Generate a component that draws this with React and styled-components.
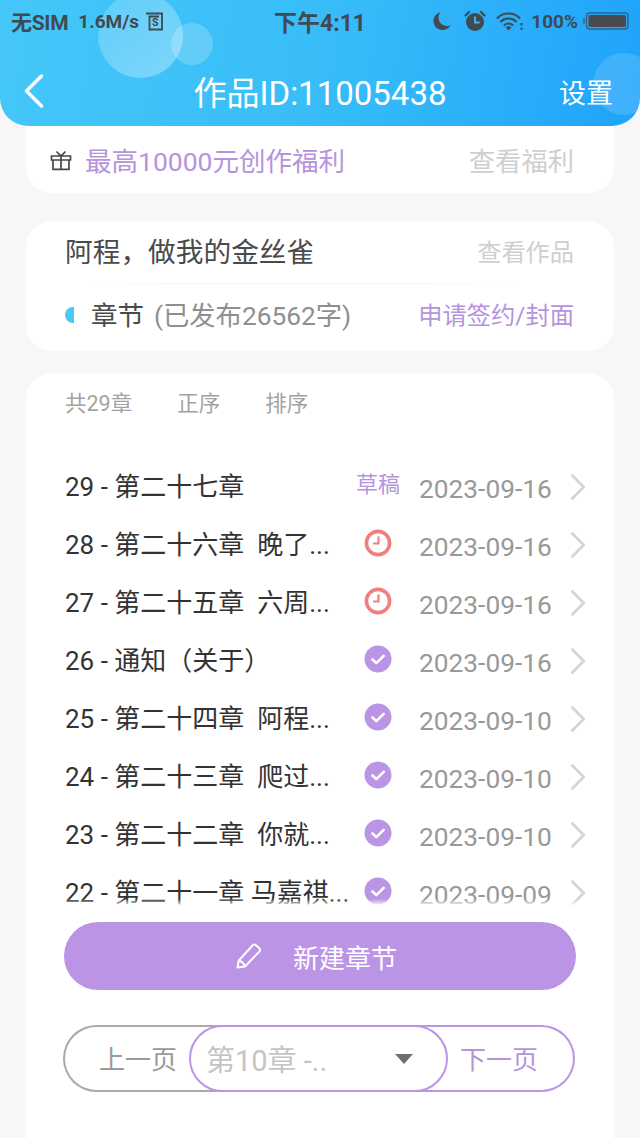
import styled, { createGlobalStyle } from 'styled-components'
import { FiChevronLeft, FiChevronRight } from 'react-icons/fi'

const chapters = [
    { id: 29, title: '29 - 第二十七章', status: 'draft', date: '2023-09-16' },
    { id: 28, title: '28 - 第二十六章  晚了...', status: 'wait', date: '2023-09-16' },
    { id: 27, title: '27 - 第二十五章  六周...', status: 'wait', date: '2023-09-16' },
    { id: 26, title: '26 - 通知（关于）', status: 'ok', date: '2023-09-16' },
    { id: 25, title: '25 - 第二十四章  阿程...', status: 'ok', date: '2023-09-10' },
    { id: 24, title: '24 - 第二十三章  爬过...', status: 'ok', date: '2023-09-10' },
    { id: 23, title: '23 - 第二十二章  你就...', status: 'ok', date: '2023-09-10' },
    { id: 22, title: '22 - 第二十一章 马嘉祺...', status: 'ok', date: '2023-09-09' },
]

function ClockIcon() {
    return (
        <svg width="28" height="28" viewBox="0 0 28 28">
            <circle cx="14" cy="14" r="11.6" fill="#fff" stroke="#f08080" strokeWidth="3.6" />
            <path d="M14.5 7.5v7H9" fill="none" stroke="#f08080" strokeWidth="2.2" />
        </svg>
    )
}

function CheckIcon() {
    return (
        <svg width="28" height="28" viewBox="0 0 28 28">
            <circle cx="14" cy="14" r="13.5" fill="#bc94e6" />
            <path d="M8.5 14.5l3.8 3.6 7.4-7.2" fill="none" stroke="#fff" strokeWidth="2.6" strokeLinecap="round" strokeLinejoin="round" />
        </svg>
    )
}

function StatusIcons() {
    return (
        <StatusBar>
            <StatusLeft>
                <span>无SIM</span>
                <Speed>1.6M/s</Speed>
                <SimIcon width="18" height="19" viewBox="0 0 18 19">
                    <path d="M1 1.5h16v16H4.500V4.500H14" fill="none" stroke="#3f4a52" strokeWidth="1.8" />
                    <text x="10" y="14" fontSize="10.500" fontWeight="700" textAnchor="middle" fill="#3f4a52" fontFamily="Roboto, sans-serif">S</text>
                </SimIcon>
            </StatusLeft>
            <StatusTime>下午4:11</StatusTime>
            <StatusRight>
                <MoonIcon width="19" height="20" viewBox="0 0 19 20">
                    <path d="M8.500 1C4 2.600 1.500 6 1.500 10c0 5 4 9 9 9 3.600 0 6.500-1.800 8-4.600-1 .5-2.300.7-3.500.7-5 0-8.500-4-8.500-8.500 0-2 .7-4 2-5.600z" fill="#3f4a52" />
                </MoonIcon>
                <svg width="22" height="22" viewBox="0 0 22 22">
                    <circle cx="11" cy="12" r="9" fill="#3f4a52" />
                    <path d="M11 6.500V12.500H15.500" fill="none" stroke="#4ab4f6" strokeWidth="1.8" />
                    <path d="M1.500 5.500L5 2M20.500 5.500L17 2" stroke="#3f4a52" strokeWidth="2.200" strokeLinecap="round" />
                </svg>
                <svg width="27" height="20" viewBox="0 0 27 20">
                    <path d="M1.500 7C7 1 18 1 23.500 7M5 10.500c4-4 11-4 15 0M8.500 14c2.200-2 5.800-2 8 0" fill="none" stroke="#3f4a52" strokeWidth="2" strokeLinecap="round" />
                    <path d="M12.500 19.500l-3-3.300c1.800-1.200 4.200-1.200 6 0z" fill="#3f4a52" />
                    <rect x="24.500" y="12" width="2" height="2.500" fill="#3f4a52" />
                    <rect x="24.500" y="16.500" width="2" height="2.500" fill="#3f4a52" />
                </svg>
                <Battery>100%</Battery>
                <svg width="46" height="18" viewBox="0 0 46 18">
                    <rect x="0" y="6" width="2" height="6" rx="1" fill="#3f6f8e" />
                    <rect x="3.500" y="1" width="41.500" height="16" rx="3" fill="none" stroke="#35617f" strokeWidth="1.400" />
                    <rect x="5.500" y="3" width="37.500" height="12" rx="1.500" fill="#474b50" />
                </svg>
            </StatusRight>
        </StatusBar>
    )
}

export default function App() {
    return (
        <Page>
            <GlobalStyle />
            <Header>
                <BigBubble />
                <SmallBubble />
                <CornerBubble />
                <StatusIcons />
                <NavBar>
                    <BackIcon />
                    <NavTitle>作品ID:11005438</NavTitle>
                    <NavAction>设置</NavAction>
                </NavBar>
            </Header>

            <Content>
                <BonusCard>
                    <svg width="22" height="22" viewBox="0 0 22 22" fill="none" stroke="#474747" strokeWidth="1.700">
                        <path d="M1.500 7h19v4h-19zM3 11v9.300h16V11M11 7v13.300M6.500 2.500L11 7l4.500-4.500" />
                    </svg>
                    <BonusText>最高10000元创作福利</BonusText>
                    <BonusLink>查看福利</BonusLink>
                </BonusCard>

                <WorkCard>
                    <WorkRow>
                        <WorkTitle>阿程，做我的金丝雀</WorkTitle>
                        <WorkLink>查看作品</WorkLink>
                    </WorkRow>
                    <ChapterRow>
                        <HalfDot />
                        <ChapterLabel>章节</ChapterLabel>
                        <ChapterCount>(已发布26562字)</ChapterCount>
                        <ApplyLink>申请签约/封面</ApplyLink>
                    </ChapterRow>
                </WorkCard>

                <ListCard>
                    <ListTools>
                        <span>共29章</span>
                        <span>正序</span>
                        <span>排序</span>
                    </ListTools>
                    <ChapterList>
                        {chapters.map((chapter) => (
                            <Row key={chapter.id}>
                                <RowTitle>{chapter.title}</RowTitle>
                                <RowStatus>
                                    {chapter.status === 'draft' && <Draft>草稿</Draft>}
                                    {chapter.status === 'wait' && <ClockIcon />}
                                    {chapter.status === 'ok' && <CheckIcon />}
                                </RowStatus>
                                <RowDate>{chapter.date}</RowDate>
                                <RowArrow />
                            </Row>
                        ))}
                        <ListFade />
                    </ChapterList>
                    <NewButton>
                        <svg width="28" height="28" viewBox="0 0 28 28" fill="none" stroke="#fff" strokeWidth="2" strokeLinejoin="round">
                            <path d="M2.500 25.500l1.200-6.800L17.500 3.500a2.600 2.600 0 0 1 3.600-.2l3 2.600a2.600 2.600 0 0 1 .2 3.700L10 24.500z" />
                            <path d="M3.700 18.700c2.500.2 5 2.400 6.300 5.800" />
                        </svg>
                        <span>新建章节</span>
                    </NewButton>
                    <Pager>
                        <PrevButton>上一页</PrevButton>
                        <PageSelect>
                            <span>第10章 -..</span>
                            <SelectArrow />
                        </PageSelect>
                        <NextButton>下一页</NextButton>
                    </Pager>
                </ListCard>
            </Content>
        </Page>
    )
}

const GlobalStyle = createGlobalStyle`
html, body {
    margin: 0;
    padding: 0;
    background: #f7f7f7;
}

* {
    box-sizing: border-box;
}
`

const Page = styled.div`
width: 640px;
height: 1138px;
overflow: hidden;
background: #f7f7f7;
font-family: Roboto, "Noto Sans CJK SC", sans-serif;
`

const Header = styled.header`
position: relative;
z-index: 1;
height: 126px;
overflow: hidden;
border-radius: 0 0 28px 28px;
background: linear-gradient(100deg, #45c7f8 0%, #38bdf9 50%, #1fa3fb 100%);
`

const BigBubble = styled.div`
position: absolute;
left: 98px;
top: -7px;
width: 85px;
height: 85px;
border-radius: 50%;
background: linear-gradient(135deg, rgba(255, 255, 255, 0.16), rgba(255, 255, 255, 0.34));
`

const SmallBubble = styled.div`
position: absolute;
left: 171px;
top: 23px;
width: 42px;
height: 42px;
border-radius: 50%;
background: rgba(255, 255, 255, 0.2);
`

const CornerBubble = styled.div`
position: absolute;
left: 593px;
top: 53px;
width: 62px;
height: 62px;
border-radius: 50%;
background: rgba(255, 255, 255, 0.14);
`

const StatusBar = styled.div`
position: relative;
display: grid;
grid-template-columns: 1fr auto 1fr;
align-items: center;
height: 44px;
padding: 0 11px 2px 11px;
color: #3f4a52;
font-weight: 700;
`

const StatusLeft = styled.div`
display: flex;
align-items: center;
gap: 10px;
font-size: 21px;
letter-spacing: -0.3px;
`

const Speed = styled.span`
font-size: 19px;
letter-spacing: 0;
`

const SimIcon = styled.svg`
margin-left: -4px;
`

const StatusTime = styled.div`
font-size: 23px;
`

const StatusRight = styled.div`
display: flex;
align-items: center;
justify-content: flex-end;
gap: 10px;
`

const MoonIcon = styled.svg`
margin-right: 3px;
`

const Battery = styled.span`
font-size: 19px;
margin-left: -2px;
margin-right: -5px;
`

const NavBar = styled.nav`
position: relative;
display: grid;
grid-template-columns: 1fr auto 1fr;
align-items: center;
height: 50px;
margin-top: 22px;
padding: 0 27px 0 21px;
color: #fff;
`

const BackIcon = styled(FiChevronLeft)`
width: 60px;
height: 60px;
margin: -5px 0 -5px -17px;
stroke-width: 1.4;
`

const NavTitle = styled.div`
font-size: 33px;
margin-left: 6px;
`

const NavAction = styled.div`
justify-self: end;
font-size: 27px;
`

const Content = styled.main`
padding: 0 26px;
`

const Card = styled.section`
background: #fff;
border-radius: 26px;
`

const BonusCard = styled(Card)`
display: flex;
align-items: center;
height: 67px;
padding: 0 40px 0 24px;
border-radius: 0 0 26px 26px;
`

const BonusText = styled.div`
flex: 1;
margin-left: 13px;
color: #b594dc;
font-size: 26.5px;
`

const BonusLink = styled.div`
color: #cfcfcf;
font-size: 26.3px;
`

const WorkCard = styled(Card)`
margin-top: 28px;
height: 130px;
padding: 0 40px;
`

const WorkRow = styled.div`
display: flex;
align-items: center;
justify-content: space-between;
height: 63px;
padding-bottom: 4px;
border-bottom: 1px solid;
border-image: linear-gradient(90deg, transparent 5%, #f5f5f5 20%, #f5f5f5 70%, transparent 90%) 1;
`

const WorkTitle = styled.div`
margin-left: -1px;
color: #4a4a4a;
font-size: 27.7px;
`

const WorkLink = styled.div`
color: #cfcfcf;
font-size: 24.2px;
`

const ChapterRow = styled.div`
display: flex;
align-items: center;
height: 58px;
`

const HalfDot = styled.i`
width: 9px;
height: 16px;
margin: 4px 17px 0 -1px;
border-radius: 8px 0 0 8px;
background: #4cc8f5;
`

const ChapterLabel = styled.span`
color: #4a4a4a;
font-size: 26.5px;
`

const ChapterCount = styled.span`
flex: 1;
margin-left: 10px;
color: #8f8f8f;
font-size: 26.3px;
`

const ApplyLink = styled.span`
color: #b594dc;
font-size: 24.3px;
`

const ListCard = styled(Card)`
margin-top: 22px;
height: 800px;
padding: 0 38px;
`

const ListTools = styled.div`
display: flex;
gap: 45px;
height: 56px;
align-items: center;
padding-left: 1px;
color: #a3a3a3;
font-size: 21.5px;
`

const ChapterList = styled.div`
position: relative;
height: 451px;
margin: 26px -24px 0 0;
overflow: hidden;
`

const ListFade = styled.div`
position: absolute;
left: 0;
right: 0;
bottom: 0;
height: 7px;
background: linear-gradient(rgba(255, 255, 255, 0), #fff);
`

const Row = styled.div`
display: grid;
grid-template-columns: 272px 82px 132px 1fr;
align-items: center;
height: 58px;
padding-left: 1px;
`

const RowTitle = styled.div`
color: #333;
font-size: 26px;
white-space: pre;
`

const RowStatus = styled.div`
display: flex;
justify-content: center;
height: 28px;
margin-top: 2px;
`

const Draft = styled.span`
color: #b594dc;
font-size: 22px;
line-height: 28px;
white-space: nowrap;
`

const RowDate = styled.div`
margin-top: 9px;
color: #999;
font-size: 26.3px;
white-space: nowrap;
`

const RowArrow = styled(FiChevronRight)`
width: 46px;
height: 46px;
margin: 6px 0 0 4px;
color: #d4d4d4;
stroke-width: 1.4;
`

const NewButton = styled.button`
display: flex;
align-items: center;
justify-content: center;
gap: 30px;
width: 512px;
height: 68px;
margin-top: 16px;
padding-right: 14px;
border: 0;
border-radius: 34px;
background: #bc94e6;
color: #fff;
font-family: inherit;
font-size: 26px;
`

const Pager = styled.div`
display: flex;
width: 512px;
height: 67px;
margin: 35px 0 0 -1px;
`

const PrevButton = styled.div`
width: 171px;
padding-left: 34px;
border: 2px solid #aaa;
border-right: 0;
border-radius: 34px 0 0 34px;
color: #999;
font-size: 26px;
line-height: 66px;
`

const PageSelect = styled.div`
position: relative;
z-index: 1;
display: flex;
align-items: center;
justify-content: space-between;
flex: none;
width: 259px;
margin-left: -45px;
padding: 0 33px 1px 15px;
border: 2px solid #bc94e6;
border-radius: 34px;
background: #fff;
color: #c4c4c4;
font-size: 29px;
`

const SelectArrow = styled.i`
width: 0;
height: 0;
margin-top: 2px;
border-left: 9px solid transparent;
border-right: 9px solid transparent;
border-top: 10px solid #6f6f6f;
`

const NextButton = styled.div`
flex: 1;
margin-left: -34px;
padding-left: 46px;
border: 2px solid #bc94e6;
border-left: 0;
border-radius: 0 34px 34px 0;
color: #b594dc;
font-size: 26px;
line-height: 66px;
`
